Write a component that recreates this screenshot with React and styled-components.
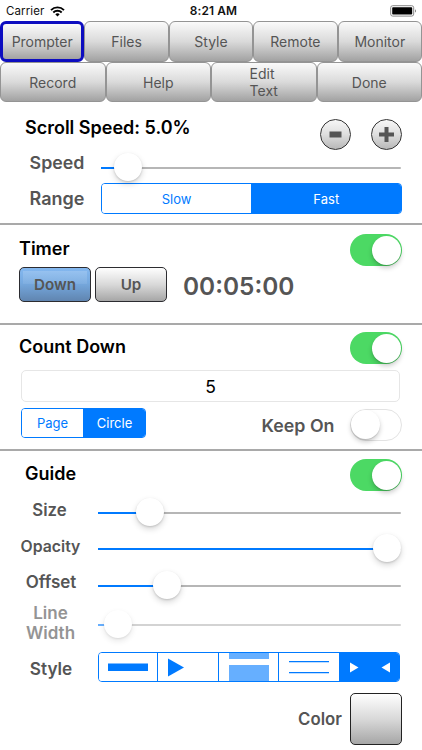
import { useState } from "react";
import styled, { createGlobalStyle, css } from "styled-components";

const GlobalStyle = createGlobalStyle`
  * {
    box-sizing: border-box;
  }
  body {
    margin: 0;
    background: #fff;
    overflow: hidden;
    font-family: Inter, Roboto, sans-serif;
  }
  button {
    font-family: inherit;
    padding: 0;
    margin: 0;
  }
`

const blue = "#007aff"
const gray = "#555"
const metal = "linear-gradient(#fefefe, #d9d9d9 50%, #a6a6a6)"

const Screen = styled.div`
  width: 422px;
  height: 750px;
  background: #fff;
`

const StatusBar = styled.div`
  display: grid;
  grid-template-columns: 1fr auto 1fr;
  align-items: center;
  height: 21px;
  padding: 1px 5px 0 6px;
  font-size: 11.5px;
  line-height: 20px;
  letter-spacing: 0.1px;
  color: #111;
`
const Carrier = styled.div`
  display: flex;
  align-items: center;
  gap: 6px;
`
const Clock = styled.div`
  font-size: 11.9px;
  font-weight: 600;
  letter-spacing: 0.15px;
  padding-left: 4px;
`
const BatteryIcon = styled.svg`
  justify-self: end;
`

const TabRow = styled.div`
  display: grid;
  grid-template-columns: repeat(${props => props.$count}, 1fr);
  height: 40.5px;
`
const Tab = styled.button`
  display: flex;
  align-items: center;
  justify-content: center;
  padding-top: 1px;
  border: 1px solid #949494;
  border-radius: 6px;
  background: linear-gradient(#fafafa, #dadada 50%, #a2a2a2);
  color: ${gray};
  font-size: 14px;
  line-height: 17px;
  text-align: left;
  ${props => props.$active && css`
    border: 3px solid #0d0dc0;
  `}
`

const Section = styled.section`
  height: ${props => props.$height}px;
  padding: ${props => props.$padding};
  border-bottom: ${props => props.$last ? "none" : "2px solid #a9a9a9"};
`
const Row = styled.div`
  display: flex;
  align-items: flex-start;
  height: ${props => props.$height}px;
`
const Title = styled.h2`
  margin: 0;
  flex: 1;
  padding-left: ${props => props.$indent || 0}px;
  font-size: 18px;
  font-weight: 600;
  line-height: 30px;
  color: #000;
  white-space: nowrap;
`
const Label = styled.div`
  width: ${props => props.$width}px;
  margin-top: ${props => props.$top || 0}px;
  padding-right: ${props => props.$inset || 0}px;
  padding-left: ${props => props.$indent || 0}px;
  color: ${props => props.$dim ? "#949494" : gray};
  font-size: ${props => props.$size || 17}px;
  font-weight: 600;
  line-height: 20px;
  text-align: center;
  white-space: nowrap;
  flex-shrink: 0;
`

const RoundButtons = styled.div`
  display: flex;
  gap: 20px;
  padding-top: 6px;
`
const RoundButton = styled.button`
  display: flex;
  align-items: center;
  justify-content: center;
  width: 31px;
  height: 31px;
  border: 1px solid #333;
  border-radius: 50%;
  background: linear-gradient(#f7f7f7, #dedede 50%, #b8b8b8);
`
const GlossButton = styled.button`
  width: 72px;
  height: 35px;
  margin-right: 4px;
  border: 1.4px solid #2c2c30;
  border-radius: 5px;
  background: ${props => props.$active
    ? "linear-gradient(rgba(255,255,255,.17), rgba(255,255,255,.07)) 50% 3px / 64px 13px no-repeat, linear-gradient(#84b8f0, #76a9df 45%, #6085b0)"
    : metal};
  color: ${gray};
  font-size: 15.2px;
  font-weight: 600;
`
const Time = styled.div`
  margin-left: 12px;
  color: ${gray};
  font-size: 24.4px;
  font-weight: 600;
  line-height: 38px;
`

const Switch = styled.button`
  position: relative;
  width: 52px;
  height: 32px;
  margin-top: ${props => props.$top || 0}px;
  flex-shrink: 0;
  border: ${props => props.$on ? "none" : "1.5px solid #e3e3e3"};
  border-radius: 16px;
  background: ${props => props.$on ? "#4cd964" : "#fff"};
  &::after {
    content: "";
    position: absolute;
    top: ${props => props.$on ? 1.5 : 0}px;
    left: ${props => props.$on ? 22 : 0}px;
    width: 29px;
    height: 29px;
    border-radius: 50%;
    background: #fff;
    box-shadow: 0 3px 5px rgba(0, 0, 0, 0.2), 0 1px 1px rgba(0, 0, 0, 0.12);
  }
`

const Track = styled.div`
  position: relative;
  flex: 1;
  height: 2px;
  margin-top: ${props => props.$top}px;
  margin-right: 1px;
  border-radius: 1px;
  background: #b6b6b6;
  opacity: ${props => props.$disabled ? 0.6 : 1};
`
const Fill = styled.div`
  height: 2px;
  background: ${blue};
`
const Thumb = styled.div`
  position: absolute;
  top: -14px;
  width: 28px;
  height: 28px;
  border-radius: 50%;
  background: #fff;
  box-shadow: 0 3px 6px rgba(0, 0, 0, 0.16), 0 1px 2px rgba(0, 0, 0, 0.14);
`

const Segmented = styled.div`
  display: grid;
  grid-template-columns: ${props => props.$columns};
  width: ${props => props.$width}px;
  height: ${props => props.$height}px;
  border: 1px solid ${blue};
  border-radius: 4px;
  overflow: hidden;
  flex-shrink: 0;
`
const Segment = styled.button`
  display: flex;
  align-items: center;
  justify-content: center;
  border: 0;
  background: ${props => props.$on ? blue : "#fff"};
  color: ${props => props.$on ? "#fff" : blue};
  font-size: 13px;
  overflow: hidden;
  & + & {
    border-left: 1px solid ${blue};
  }
`

const Field = styled.div`
  width: 379px;
  height: 32px;
  margin-left: 2px;
  border: 1px solid #e6e6e6;
  border-radius: 5px;
  font-size: 17.5px;
  line-height: 31px;
  text-align: center;
  color: #000;
`
const Spacer = styled.div`
  flex: 1;
`
const Swatch = styled.button`
  width: 52px;
  height: 52px;
  margin-left: 7px;
  border: 1.4px solid #222;
  border-radius: 5px;
  background: ${metal};
`

function Slider({ value, top, disabled }) {
  return (
    <Track $top={top} $disabled={disabled}>
      <Fill style={{ width: value + 14 }} />
      <Thumb style={{ left: value }} />
    </Track>
  )
}

function WifiIcon() {
  return (
    <svg width="15" height="11" viewBox="0 0 15 11" fill="none" stroke="#000" strokeWidth="1.9">
      <path d="M1 4.1a9.2 9.2 0 0 1 13 0" />
      <path d="M3.3 6.5a6 6 0 0 1 8.4 0" />
      <path d="M7.5 10.6 5.3 8.3a3.1 3.1 0 0 1 4.4 0z" fill="#000" stroke="none" />
    </svg>
  )
}

function Battery() {
  return (
    <BatteryIcon width="27" height="12" viewBox="0 0 27 12">
      <rect x="0.7" y="0.7" width="23" height="10.4" rx="2" fill="#fff" stroke="#888" />
      <rect x="2.2" y="2.2" width="20" height="7.4" rx="0.8" fill="#000" />
      <path d="M25 4.2c1.4.5 1.4 2.9 0 3.4z" fill="#888" />
    </BatteryIcon>
  )
}

function App() {
  const [range, setRange] = useState("Fast");
  const [shape, setShape] = useState("Circle");
  const [timer, setTimer] = useState(true);
  const [countDown, setCountDown] = useState(true);
  const [keepOn, setKeepOn] = useState(false);
  const [guide, setGuide] = useState(true);

  return (
    <Screen>
      <GlobalStyle />
      <StatusBar>
        <Carrier>Carrier <WifiIcon /></Carrier>
        <Clock>8:21 AM</Clock>
        <Battery />
      </StatusBar>
      <TabRow $count={5}>
        <Tab $active>Prompter</Tab>
        <Tab>Files</Tab>
        <Tab>Style</Tab>
        <Tab>Remote</Tab>
        <Tab>Monitor</Tab>
      </TabRow>
      <TabRow $count={4}>
        <Tab>Record</Tab>
        <Tab>Help</Tab>
        <Tab>Edit<br />Text</Tab>
        <Tab>Done</Tab>
      </TabRow>

      <Section $height={123} $padding="11px 20px 0 20px">
        <Row $height={40}>
          <Title $indent={5}>Scroll Speed: 5.0%</Title>
          <RoundButtons>
            <RoundButton>
              <svg width="15" height="15"><path d="M1.5 7.5H13.5" stroke={gray} strokeWidth="6" /></svg>
            </RoundButton>
            <RoundButton>
              <svg width="15" height="15"><path d="M0 7.5H15M7.5 0V15" stroke={gray} strokeWidth="4" /></svg>
            </RoundButton>
          </RoundButtons>
        </Row>
        <Row $height={30}>
          <Label $width={81} $inset={7} $size={17.8}>Speed</Label>
          <Slider value={12.5} top={14} />
        </Row>
        <Row $height={31}>
          <Label $width={81} $inset={7} $top={6} $size={18}>Range</Label>
          <Segmented $width={300.5} $height={31} $columns="149px 1fr">
            <Segment $on={range === "Slow"} onClick={() => setRange("Slow")}>Slow</Segment>
            <Segment $on={range === "Fast"} onClick={() => setRange("Fast")}>Fast</Segment>
          </Segmented>
        </Row>
      </Section>

      <Section $height={100} $padding="9px 20px 0 19px">
        <Row $height={33}>
          <Title>Timer</Title>
          <Switch $on={timer} onClick={() => setTimer(!timer)} />
        </Row>
        <Row $height={35}>
          <GlossButton $active>Down</GlossButton>
          <GlossButton>Up</GlossButton>
          <Time>00:05:00</Time>
        </Row>
      </Section>

      <Section $height={126} $padding="7px 20px 0 19px">
        <Row $height={38}>
          <Title>Count Down</Title>
          <Switch $on={countDown} onClick={() => setCountDown(!countDown)} />
        </Row>
        <Row $height={38}>
          <Field>5</Field>
        </Row>
        <Row $height={32}>
          <Label $width={2} />
          <Segmented $width={125} $height={30} $columns="61px 1fr">
            <Segment $on={shape === "Page"} onClick={() => setShape("Page")}>Page</Segment>
            <Segment $on={shape === "Circle"} onClick={() => setShape("Circle")}>Circle</Segment>
          </Segmented>
          <Spacer />
          <Label $width={104} $top={8} $size={17.8}>Keep On</Label>
          <Switch $top={1} $on={keepOn} onClick={() => setKeepOn(!keepOn)} />
        </Row>
      </Section>

      <Section $last $height={299} $padding="8px 20px 0 0">
        <Row $height={40}>
          <Title $indent={25}>Guide</Title>
          <Switch $on={guide} onClick={() => setGuide(!guide)} />
        </Row>
        <Row $height={37}>
          <Label $width={98} $indent={1} $top={1} $size={16.8}>Size</Label>
          <Slider value={38} top={13} />
        </Row>
        <Row $height={36}>
          <Label $width={98} $indent={3} $top={1} $size={15.8}>Opacity</Label>
          <Slider value={275} top={12} />
        </Row>
        <Row $height={30}>
          <Label $width={98} $indent={4} $size={17}>Offset</Label>
          <Slider value={55} top={13} />
        </Row>
        <Row $height={50}>
          <Label $width={98} $indent={3} $top={0.5} $size={17} $dim>Line<br />Width</Label>
          <Slider value={6} top={22} disabled />
        </Row>
        <Row $height={41}>
          <Label $width={98} $indent={4} $top={6.5} $size={17.2}>Style</Label>
          <Segmented $width={302} $height={30} $columns="58px 61px 60px 61px 1fr">
            <Segment>
              <svg width="40" height="28"><rect y="10.5" width="40" height="7.5" fill={blue} /></svg>
            </Segment>
            <Segment>
              <svg width="40" height="28"><path d="M0 5.5 16 14.5 0 23.5z" fill={blue} /></svg>
            </Segment>
            <Segment>
              <svg width="40" height="28" fill="#66afff">
                <rect width="40" height="6" />
                <rect y="12" width="40" height="16" />
              </svg>
            </Segment>
            <Segment>
              <svg width="40" height="28" stroke={blue} strokeWidth="1.2">
                <path d="M0 8.7H40M0 19.7H40" />
              </svg>
            </Segment>
            <Segment $on>
              <svg width="40" height="28" fill="#fff">
                <path d="M0 9.5 8.5 14.5 0 19.5z" />
                <path d="M40 9.5 31.5 14.5 40 19.5z" />
              </svg>
            </Segment>
          </Segmented>
        </Row>
        <Row $height={52}>
          <Spacer />
          <Label $width={46} $top={16} $size={16.8}>Color</Label>
          <Swatch />
        </Row>
      </Section>
    </Screen>
  )
}

export default App;
